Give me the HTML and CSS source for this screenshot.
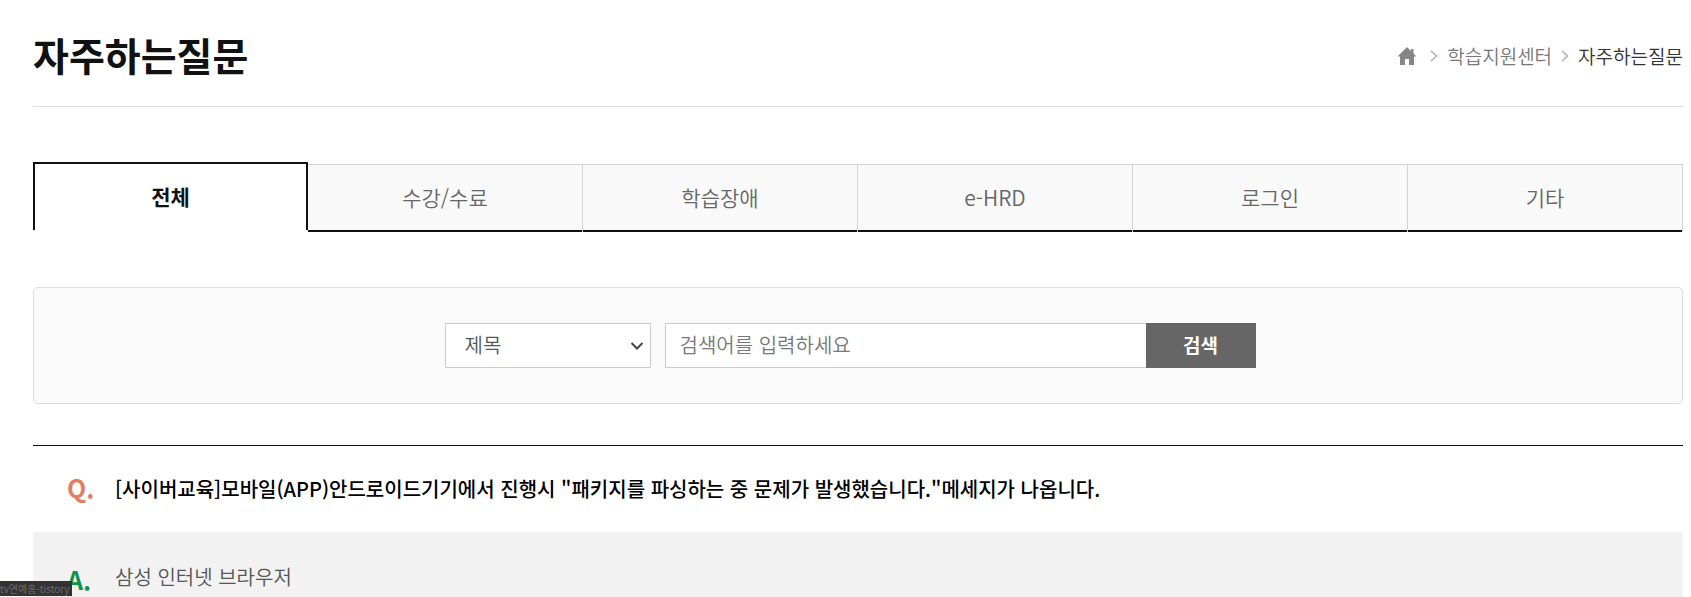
FILE: index.html
```html
<!DOCTYPE html>
<html lang="ko">
<head>
<meta charset="utf-8">
<meta name="viewport" content="width=device-width, initial-scale=1">
<title>자주하는질문</title>
<link rel="stylesheet" href="styles.css">
</head>
<body>
<main class="page">
  <header class="page-header">
    <h1 class="page-title">자주하는질문</h1>
    <nav class="breadcrumb" aria-label="현재 위치">
      <a class="crumb-home" href="#" aria-label="홈">
        <svg width="20" height="20" viewBox="0 0 20 20" aria-hidden="true"><path fill="#868686" d="M10 1 L14 5 V3 H16.500 V7.500 L19.500 10.500 H17 V19 H12 V13 H8 V19 H3 V10.500 H.5 Z"/></svg>
      </a>
      <svg class="crumb-arrow" width="8" height="12" viewBox="0 0 8 12" aria-hidden="true"><path fill="none" stroke="#b0b0b0" stroke-width="1.500" d="M1 1 L6.500 6 L1 11"/></svg>
      <a class="crumb" href="#">학습지원센터</a>
      <svg class="crumb-arrow" width="8" height="12" viewBox="0 0 8 12" aria-hidden="true"><path fill="none" stroke="#b0b0b0" stroke-width="1.500" d="M1 1 L6.500 6 L1 11"/></svg>
      <a class="crumb current" href="#" aria-current="page">자주하는질문</a>
    </nav>
  </header>

  <nav class="tabs" aria-label="질문 분류">
    <a class="tab active" href="#">전체</a>
    <a class="tab" href="#">수강/수료</a>
    <a class="tab" href="#">학습장애</a>
    <a class="tab" href="#">e-HRD</a>
    <a class="tab" href="#">로그인</a>
    <a class="tab" href="#">기타</a>
  </nav>

  <form class="search">
    <div class="select-wrap">
      <select class="select" aria-label="검색 조건"><option>제목</option></select>
      <svg class="select-arrow" width="14" height="8" viewBox="0 0 14 8" aria-hidden="true"><path fill="none" stroke="#444" stroke-width="2" d="M1.500 1 L7 6.500 L12.500 1"/></svg>
    </div>
    <div class="keyword">
      <input class="keyword-input" type="text" placeholder="검색어를 입력하세요" aria-label="검색어">
      <button class="keyword-button" type="submit">검색</button>
    </div>
  </form>

  <section class="faq">
    <div class="row question">
      <span class="mark mark-q">Q.</span>
      <p class="text">[사이버교육]모바일(APP)안드로이드기기에서 진행시 "패키지를 파싱하는 중 문제가 발생했습니다."메세지가 나옵니다.</p>
    </div>
    <div class="row answer">
      <span class="mark mark-a">A.</span>
      <p class="text">삼성 인터넷 브라우저</p>
    </div>
  </section>
</main>
<div class="source-tag">tv연예홈-tistory</div>
</body>
</html>
```
FILE: styles.css
```css
* {
  box-sizing: border-box;
}

body {
  margin: 0;
  background: #fff;
  color: #111;
  font-family: "Noto Sans CJK KR", "Noto Sans", sans-serif;
  font-size: 20px;
  font-weight: 350;
  overflow: hidden;
}

a {
  color: inherit;
  text-decoration: none;
}

.page {
  padding: 0 8px 0 33px;
}

.page-header {
  display: flex;
  align-items: center;
  justify-content: space-between;
  height: 107px;
  padding-top: 2px;
  border-bottom: 1px solid #ddd;
}

.page-title {
  margin: 0;
  font-size: 39px;
  font-weight: 700;
  line-height: 56px;
}

.breadcrumb {
  display: flex;
  align-items: center;
  gap: 9px;
  padding-top: 4px;
  color: #777;
  font-size: 19px;
  line-height: 26px;
}

.crumb-home {
  display: flex;
  margin-right: 4px;
}

.current {
  color: #333;
}

.tabs {
  display: grid;
  grid-template-columns: repeat(6, 1fr);
  align-items: end;
  margin-top: 55px;
}

.tab {
  height: 68px;
  border: solid #d2d2d2;
  border-width: 1px 1px 0 0;
  background: #f9f9f9;
  box-shadow: inset 0 -2px #111;
  color: #666;
  font-size: 21px;
  line-height: 64px;
  text-align: center;
}

.tab.active {
  height: 68px;
  margin-bottom: 2px;
  border: 2px solid #111;
  border-bottom: 0;
  background: #fff;
  box-shadow: none;
  color: #111;
  font-weight: 700;
}

.search {
  display: flex;
  justify-content: center;
  gap: 14px;
  margin-top: 55px;
  padding: 35px 16px 35px 0;
  border: 1px solid #ddd;
  border-radius: 5px;
  background: #fafafa;
}

.select-wrap {
  position: relative;
  width: 206px;
}

.select,
.keyword-input {
  width: 100%;
  height: 45px;
  border: 1px solid #ccc;
  border-radius: 0;
  background: #fff;
  color: #555;
  font: inherit;
}

.select {
  padding: 0 19px 2px;
  appearance: none;
}

.select-arrow {
  position: absolute;
  top: 19px;
  right: 7px;
  pointer-events: none;
}

.keyword {
  display: flex;
  width: 591px;
}

.keyword-input {
  flex: 1;
  min-width: 0;
  padding: 0 14px 2px;
  border-right: 0;
}

.keyword-input::placeholder {
  color: #777;
}

.keyword-button {
  width: 110px;
  padding: 0 0 2px;
  border: 0;
  background: #666;
  color: #fff;
  font: inherit;
  font-size: 19px;
  font-weight: 700;
}

.faq {
  margin-top: 41px;
  border-top: 1px solid #111;
}

.row {
  display: flex;
  align-items: flex-start;
  padding: 26px 34px 28px;
}

.text {
  margin: 0;
  padding-top: 2px;
  line-height: 30px;
}

.mark {
  width: 48px;
  font-size: 25px;
  font-weight: 700;
  line-height: 30px;
}

.mark-q {
  color: #e37e62;
}

.mark-a {
  padding-top: 4px;
  color: #0f9447;
}

.question {
  color: #000;
  font-weight: 500;
}

.answer {
  padding-top: 28px;
  background: #f2f2f2;
  color: #555;
}

.source-tag {
  position: fixed;
  bottom: 1px;
  left: 0;
  width: 72px;
  overflow: hidden;
  background: #333;
  color: #707070;
  font-size: 10px;
  line-height: 15px;
  white-space: nowrap;
}
```
